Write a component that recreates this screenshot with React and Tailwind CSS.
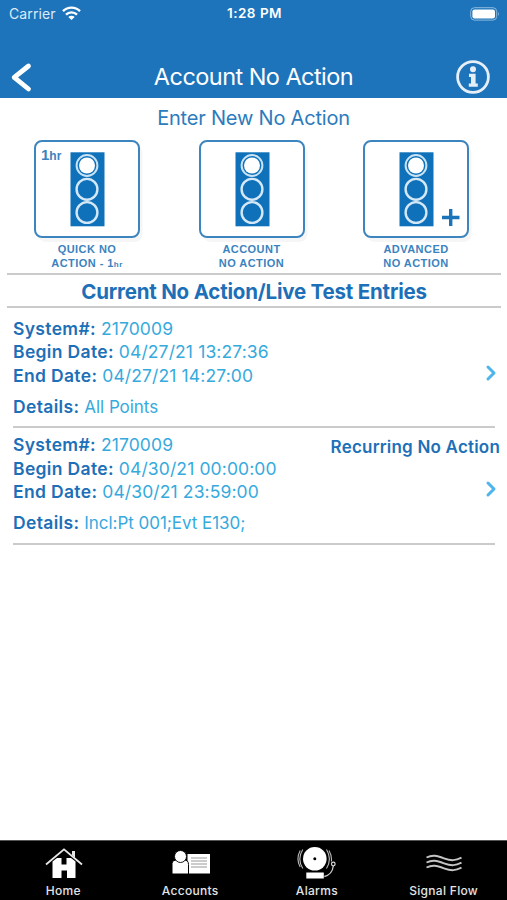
import { ChevronRight } from "lucide-react";

const entries = [
  { system: "2170009", begin: "04/27/21 13:27:36", end: "04/27/21 14:27:00", details: "All Points", recurring: false },
  { system: "2170009", begin: "04/30/21 00:00:00", end: "04/30/21 23:59:00", details: "Incl:Pt 001;Evt E130;", recurring: true },
];

function StatusBar() {
  return (
    <div className="h-7 grid grid-cols-3 items-center pl-[9px] pr-[7px] text-white">
      <div className="flex items-center gap-1.5">
        <span className="text-[14px] leading-none tracking-[0.1px] text-[#dcebf7]">Carrier</span>
        <svg className="-mt-[2px]" width="19" height="14" viewBox="0 0 19 14" fill="none" stroke="white" strokeWidth="2.4">
          <path d="M1 5.2a12 12 0 0 1 17 0" />
          <path d="M4 8.6a7.8 7.8 0 0 1 11 0" />
          <path d="M9.5 14 6.3 11a4.5 4.5 0 0 1 6.4 0z" fill="white" stroke="none" />
        </svg>
      </div>
      <span className="text-center text-[13.5px] leading-none font-semibold tracking-[0.5px]">1:28 PM</span>
      <svg className="justify-self-end -mt-[1px]" width="30" height="14" viewBox="0 0 30 14" fill="none">
        <rect x="0.7" y="0.7" width="26" height="12.4" rx="3.8" stroke="#8db9de" />
        <rect x="2.4" y="2.4" width="22.6" height="9" rx="2.2" fill="white" />
        <path d="M28 4.8q1.8 2.1 0 4.2z" fill="#8db9de" />
      </svg>
    </div>
  );
}

function Header() {
  return (
    <header className="h-[98px] bg-[#1d74bb] text-white">
      <StatusBar />
      <div className="h-[70px] flex items-end justify-between pl-[10px] pr-[16px] pb-[3px]">
        <svg className="w-[38px] h-[36px]" viewBox="0 0 38 36" fill="none" stroke="white" strokeWidth="4.8" strokeLinecap="round" strokeLinejoin="round">
          <path d="M18.5 7 4.2 18.4 18.5 30" />
        </svg>
        <h1 className="pl-[4px] text-[23.5px] leading-[36px] tracking-[-0.55px]">Account No Action</h1>
        <svg className="w-[36px] h-[36px]" viewBox="0 0 36 36" fill="#e6eef6">
          <circle cx="18" cy="18" r="15.4" fill="none" stroke="#e6eef6" strokeWidth="2.8" />
          <circle cx="18" cy="10.2" r="3" />
          <path d="M14 14.8h6.6v9.7h2.2v3.2h-9v-3.2H16v-6.5h-2z" />
        </svg>
      </div>
    </header>
  );
}

function TrafficLight({ children }) {
  return (
    <svg className="w-[112px] h-[104px]" viewBox="0 0 112 104" fill="none">
      <rect x="5" y="5" width="104.5" height="97" rx="8" fill="#f6f6f7" />
      <rect x="2" y="1" width="104" height="96" rx="7" fill="white" stroke="#3d85bf" strokeWidth="2" />
      <rect x="37.5" y="12.3" width="34" height="74" fill="#0f71b9" />
      <circle cx="54" cy="25.5" r="10.4" stroke="#c9e3f5" strokeWidth="2" />
      <circle cx="54" cy="25.5" r="8" fill="white" />
      <circle cx="54" cy="49.3" r="10.4" stroke="#d4e8f7" strokeWidth="2.4" />
      <circle cx="54" cy="72.5" r="10.4" stroke="#d4e8f7" strokeWidth="2.4" />
      {children}
    </svg>
  );
}

function ActionButton({ children, lines }) {
  return (
    <button className="w-[112px] flex flex-col items-center">
      <TrafficLight>{children}</TrafficLight>
      <span className="-mt-[1px] pr-[4px] font-['Liberation_Sans',sans-serif] text-[11px] leading-[13.5px] font-bold tracking-[0.45px] text-[#3b83be] whitespace-nowrap">
        {lines}
      </span>
    </button>
  );
}

function Field({ label, value, small }) {
  return (
    <p className="text-[17.5px] leading-[23.3px]">
      <span className="font-semibold text-[#1d70b7] tracking-[0.34px]">{label}</span>{" "}
      <span className={small ? "text-[17px] text-[#36aadd] tracking-[-0.04px]" : "text-[#36aadd] tracking-[0.12px]"}>{value}</span>
    </p>
  );
}

function Entry({ entry }) {
  return (
    <li className="h-[116.3px] ml-[13px] mr-[12px] border-b-2 border-[#cbcbcb] flex justify-between">
      <div className="pt-[5px]">
        <Field label="System#:" value={entry.system} />
        <Field label="Begin Date:" value={entry.begin} />
        <Field label="End Date:" value={entry.end} />
        <div className="mt-[8px]">
          <Field label="Details:" value={entry.details} small />
        </div>
      </div>
      <div className="flex flex-col items-end -mr-[5px]">
        <span className="h-[49px] pt-[8px] text-[17px] leading-[22px] font-semibold tracking-[0.2px] text-[#1d70b7] whitespace-nowrap">
          {entry.recurring && "Recurring No Action"}
        </span>
        <ChevronRight className="w-[24px] h-[24px] mr-[-3px] text-[#4db5ea]" strokeWidth={3} />
      </div>
    </li>
  );
}

function HomeIcon() {
  return (
    <svg className="ml-[1px]" width="40" height="34" viewBox="0 0 40 34" fill="none">
      <path d="M2 18.5 20 3.4l18 15.1" stroke="#e8e8e8" strokeWidth="1.8" />
      <path d="M28 9V5h3v7z" fill="#e8e8e8" />
      <path d="M8.5 15.5 13 12h4.5v6.5h5V12H27l4.500 3.500V32H23v-7.500h-5.500V32h-9z" fill="white" />
    </svg>
  );
}

function AccountsIcon() {
  return (
    <svg className="ml-[1px]" width="40" height="34" viewBox="0 0 40 34">
      <rect x="16.5" y="8" width="22.5" height="19.5" fill="#fff" />
      <path d="M20 12h16M20 15h16M20 18h16M20 21h16" stroke="#999" strokeWidth="1" />
      <path d="M1 28V17.5Q1 14 5 14h8q4.500 0 4.500 4.500V28z" fill="#fff" stroke="#000" strokeWidth="1" />
      <circle cx="9.5" cy="10.5" r="6" fill="#fff" stroke="#000" strokeWidth="0.9" />
    </svg>
  );
}

function AlarmsIcon() {
  return (
    <svg className="ml-[1px]" width="40" height="34" viewBox="0 0 40 34" fill="none">
      <circle cx="17.8" cy="12.8" r="11.8" fill="white" />
      <circle cx="17.8" cy="12.8" r="1.5" fill="black" />
      <path d="M5.8 3.5q-6 9.5 0 19M3.2 4.5q-4.500 8.500 0 16.500M29.5 3.5q5.8 9.5 0 19M32 4.500q3 5 2.400 11" stroke="#bbb" strokeWidth="1.1" />
      <circle cx="36.3" cy="18" r="1.8" stroke="#ddd" strokeWidth="1.2" />
      <path d="M36.300 20q-1 8.500-9 10.500" stroke="#ccc" strokeWidth="1.3" />
      <rect x="9.3" y="26.5" width="17.5" height="6" fill="white" />
    </svg>
  );
}

function SignalIcon() {
  return (
    <svg width="40" height="34" viewBox="0 0 40 34" fill="none" stroke="#c4c4c4" strokeWidth="1.9">
      <path d="M2.5 11.500c6-3 10-2 17.500.8s11.500 2.400 17.500-.6" />
      <path d="M2.5 16.500c6-3 10-2 17.500.8s11.500 2.400 17.500-.6" />
      <path d="M2.5 21.500c6-3 10-2 17.500.8s11.500 2.400 17.500-.6" />
    </svg>
  );
}

const tabs = [
  { name: "Home", icon: HomeIcon },
  { name: "Accounts", icon: AccountsIcon },
  { name: "Alarms", icon: AlarmsIcon },
  { name: "Signal Flow", icon: SignalIcon },
];

export default function App() {
  return (
    <div className="w-[507px] h-[900px] flex flex-col overflow-hidden bg-white font-[Inter,sans-serif]">
      <Header />

      <main className="flex-1">
        <h2 className="h-[42px] pt-[7px] text-center text-[20px] leading-[26px] tracking-[-0.2px] text-[#2c7bbd]">
          Enter New No Action
        </h2>
        <div className="h-[133px] px-[33px] flex justify-between">
          <ActionButton lines={<>QUICK NO<br />ACTION - 1<span className="text-[8px]">hr</span></>}>
            <text x="8" y="20" fill="#3b83be" className="font-['Liberation_Sans',sans-serif] font-bold text-[15px]">
              1<tspan className="text-[12px]">hr</tspan>
            </text>
          </ActionButton>
          <ActionButton lines={<>ACCOUNT<br />NO ACTION</>} />
          <ActionButton lines={<>ADVANCED<br />NO ACTION</>}>
            <path d="M80 77.500h17.500M88.700 69v17" stroke="#1b74b9" strokeWidth="3.4" />
          </ActionButton>
        </div>

        <h2 className="h-[35px] ml-[7px] mr-[6px] border-y-2 border-[#cbcbcb] text-center text-[20.5px] leading-[33px] font-bold tracking-[-0.2px] text-[#1d70b7]">
          Current No Action/Live Test Entries
        </h2>
        <ul className="pt-[4px]">
          {entries.map((entry) => (
            <Entry key={entry.begin} entry={entry} />
          ))}
        </ul>
      </main>

      <nav className="h-[60px] grid grid-cols-4 bg-black border-t border-[#555]">
        {tabs.map(({ name, icon: Icon }) => (
          <button key={name} className="flex flex-col items-center pt-[5px]">
            <Icon />
            <span className="text-[12px] leading-[22px] font-medium tracking-[0.3px] text-[#e4e4e4] whitespace-nowrap">{name}</span>
          </button>
        ))}
      </nav>
    </div>
  );
}
